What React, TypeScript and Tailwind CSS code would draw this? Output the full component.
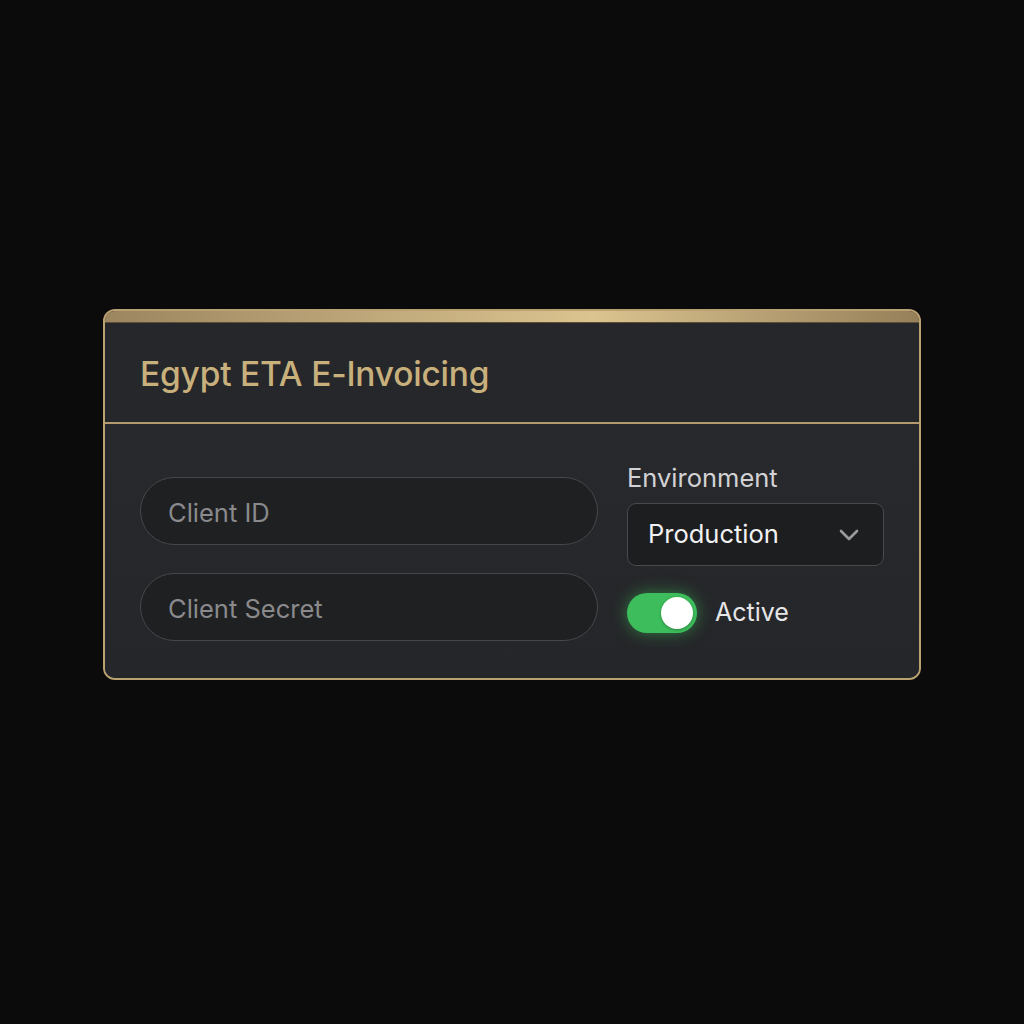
import { ChevronDown } from 'lucide-react';

export default function App() {
  return (
    <div className="w-full h-screen bg-[#0b0b0b] flex justify-center pt-[309px] font-['Inter','Noto_Sans',sans-serif]">
      <div className="w-[818px] h-[371px] rounded-[12px] border-2 border-[#b9a172] bg-[#26272a] overflow-hidden flex flex-col">
        {/* gold band */}
        <div className="h-[12px] shrink-0 bg-gradient-to-r from-[#9c8660] via-[#dcc490] via-60% to-[#96805a] border-b border-[#5e5038]" />

        {/* header */}
        <div className="h-[101px] shrink-0 flex items-center px-[35px] pt-[4px] border-b-2 border-[#b39b6e]">
          <h1 className="text-[33.5px] font-medium tracking-[-0.2px] text-[#c8b07c]">Egypt ETA E-Invoicing</h1>
        </div>

        {/* body */}
        <div className="flex-1 flex gap-[29px] px-[35px] pt-[40px] bg-gradient-to-b from-[#28292c] to-[#252629]">
          <div className="w-[458px] flex flex-col gap-[28px] pt-[13px]">
            <input
              placeholder="Client ID"
              className="h-[68px] w-full rounded-full border border-[#46474a] bg-[#1f2022] px-[27px] pt-[2px] text-[25.5px] text-white placeholder:text-[#8a8a8c] outline-none"
            />
            <input
              placeholder="Client Secret"
              className="h-[68px] w-full rounded-full border border-[#46474a] bg-[#1f2022] px-[27px] pt-[2px] text-[25.5px] text-white placeholder:text-[#8a8a8c] outline-none"
            />
          </div>

          <div className="w-[257px] flex flex-col">
            <label className="text-[25.5px] leading-[28px] text-[#d2d2d4]">Environment</label>
            <button className="mt-[11px] h-[63px] w-full rounded-[9px] border border-[#48494c] bg-[#1d1e20] flex items-center justify-between pl-[20px] pr-[18px]">
              <span className="text-[25.5px] text-[#f2f2f2]">Production</span>
              <ChevronDown className="w-[32px] h-[32px] text-[#9a9a9c]" strokeWidth={2} />
            </button>
            <div className="mt-[27px] flex items-center gap-[18px]">
              <div className="w-[70px] h-[40px] rounded-full bg-[#3dbd5b] shadow-[0_0_16px_rgba(61,189,91,0.55)] flex items-center justify-end pr-[4px]">
                <div className="w-[32px] h-[32px] rounded-full bg-white shadow-[0_1px_3px_rgba(0,0,0,0.3)]" />
              </div>
              <span className="text-[25px] text-[#e6e6e8]">Active</span>
            </div>
          </div>
        </div>
      </div>
    </div>
  );
}
